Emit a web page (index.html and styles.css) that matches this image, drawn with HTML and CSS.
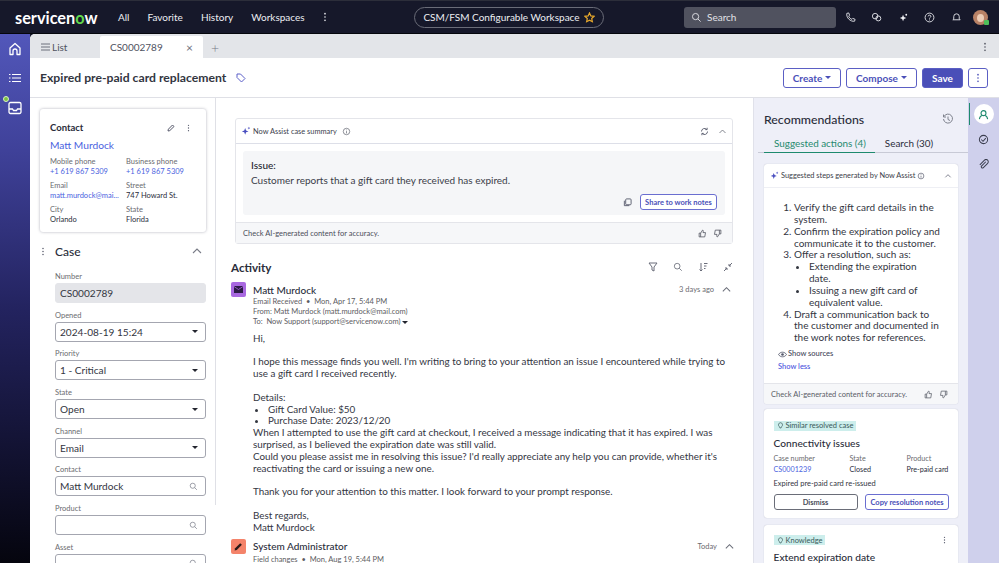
FILE: index.html
```html
<!DOCTYPE html>
<html lang="en">
<head>
<meta charset="utf-8">
<title>Expired pre-paid card replacement</title>
<link rel="stylesheet" href="styles.css">
</head>
<body>
<svg class="defs" width="0" height="0" aria-hidden="true">
  <defs>
    <symbol id="spark" viewBox="0 0 12 12"><path d="M5 2.500 6.100 5.400 9 6.500 6.100 7.600 5 10.500 3.900 7.600 1 6.500 3.900 5.400Z" fill="#4a4fc0"/><path d="M9.500.8 10 2 11.200 2.500 10 3 9.500 4.200 9 3 7.800 2.500 9 2Z" fill="#4a4fc0"/></symbol>
    <symbol id="info" viewBox="0 0 12 12"><circle cx="6" cy="6" r="4.300" fill="none" stroke="currentColor"/><path d="M6 5.500v3M6 3.400v1" stroke="currentColor"/></symbol>
    <symbol id="up" viewBox="0 0 12 12"><path d="M2 8l4-4 4 4" fill="none" stroke="currentColor" stroke-width="1.100"/></symbol>
    <symbol id="mag" viewBox="0 0 12 12"><circle cx="5" cy="5" r="3.400" fill="none" stroke="currentColor"/><path d="M7.500 7.500l3 3" stroke="currentColor"/></symbol>
    <symbol id="dots" viewBox="0 0 4 12"><circle cx="2" cy="2" r="1" fill="currentColor"/><circle cx="2" cy="6" r="1" fill="currentColor"/><circle cx="2" cy="10" r="1" fill="currentColor"/></symbol>
    <symbol id="thumbup" viewBox="0 0 12 12"><path d="M1.500 5.500h2v5h-2zM3.500 5.500 6 1.500c1 0 1.300.8 1 1.800L6.700 4.800h3.300l-1 5.700H3.500" fill="none" stroke="currentColor"/></symbol>
    <symbol id="thumbdown" viewBox="0 0 12 12"><path d="M10.500 6.500h-2v-5h2zM8.500 6.500 6 10.500c-1 0-1.300-.8-1-1.800l.3-1.500H2l1-5.700h5.500" fill="none" stroke="currentColor"/></symbol>
    <symbol id="bulb" viewBox="0 0 10 10"><path d="M5 1a3 3 0 0 1 1.800 5.300L5.800 8.500H4.200L3.200 6.300A3 3 0 0 1 5 1Z" fill="none" stroke="currentColor"/></symbol>
  </defs>
</svg>
<div class="app">
  <header class="topbar">
    <div class="logo">servicen<span class="logo-o">o</span>w</div>
    <nav class="nav"><span>All</span><span>Favorite</span><span>History</span><span>Workspaces</span>
      <svg class="nav-dots" width="4" height="10"><use href="#dots"/></svg></nav>
    <div class="workspace-wrap">
      <div class="workspace">CSM/FSM Configurable Workspace
        <svg width="11" height="11" viewBox="0 0 12 12"><path d="M6 1l1.500 3.300 3.500.4-2.600 2.400.7 3.500L6 8.900l-3.100 1.700.7-3.500L1 4.700l3.500-.4Z" fill="none" stroke="#e8a92c" stroke-width="1.300"/></svg>
      </div>
    </div>
    <div class="globalsearch">
      <svg width="11" height="11"><use href="#mag"/></svg><span>Search</span>
    </div>
    <div class="top-icons">
      <svg viewBox="0 0 12 12"><path d="M2 1.500 4 1 5 3.500 4 4.500C4.500 6 6 7.500 7.500 8L8.500 7l2.500 1-.5 2C6 11 1 6 2 1.500Z" fill="none" stroke="#e4e5ea"/></svg>
      <svg viewBox="0 0 12 12"><circle cx="4.500" cy="4.500" r="3" fill="none" stroke="#e4e5ea"/><circle cx="8" cy="7" r="2.700" fill="none" stroke="#e4e5ea"/></svg>
      <svg viewBox="0 0 12 12"><path d="M5.500 3 6.500 5.500 9 6.500 6.500 7.500 5.500 10 4.500 7.500 2 6.500 4.500 5.500Z" fill="#f0f1f5"/><circle cx="9" cy="3" r="1" fill="#f0f1f5"/></svg>
      <svg viewBox="0 0 12 12"><circle cx="6" cy="6" r="4.800" fill="none" stroke="#e4e5ea"/><path d="M4.500 4.800C4.500 3 7.500 3 7.500 4.800 7.500 6 6 5.800 6 7.200M6 8.200v1" fill="none" stroke="#e4e5ea"/></svg>
      <svg viewBox="0 0 12 12"><path d="M6 2a3 3 0 0 1 3 3v2.500l1 1H2l1-1V5a3 3 0 0 1 3-3Z" fill="none" stroke="#e4e5ea"/></svg>
      <span class="avatar"><span class="avatar-face"></span><span class="avatar-dot"></span></span>
    </div>
  </header>
  <div class="body">
    <aside class="rail">
      <svg width="14" height="14" viewBox="0 0 14 14"><path d="M2 12.500V6l5-4.500L12 6v6.500H9V9a2 2 0 0 0-4 0v3.500Z" fill="none" stroke="#fff" stroke-width="1.300" stroke-linejoin="round"/></svg>
      <svg width="14" height="14" viewBox="0 0 14 14"><path d="M4 3.500h9M4 7h9M4 10.500h9M1 3.500h1.500M1 7h1.500M1 10.500h1.500" stroke="#fff" stroke-width="1.200"/></svg>
      <span class="inbox">
        <span class="inbox-dot"></span>
        <svg width="14" height="14" viewBox="0 0 14 14"><path d="M1 8V3a1.500 1.500 0 0 1 1.500-1.500h9A1.500 1.500 0 0 1 13 3v8a1.500 1.500 0 0 1-1.500 1.500h-9A1.500 1.500 0 0 1 1 11V8h3.500l1 1.500h3l1-1.500H13" fill="none" stroke="#fff" stroke-width="1.300"/></svg>
      </span>
    </aside>
    <main class="main">
      <div class="tabs">
        <div class="tab tab-list"><svg width="9" height="8" viewBox="0 0 9 8"><path d="M0 1h9M0 4h9M0 7h9" stroke="#6d707c"/></svg>List</div>
        <div class="tab tab-active"><span>CS0002789</span><span class="tab-x">×</span></div>
        <span class="tab-plus">+</span>
        <svg class="tabs-dots" width="4" height="10"><use href="#dots"/></svg>
      </div>
      <div class="titlebar">
        <h1>Expired pre-paid card replacement</h1>
        <svg class="tag" width="10" height="10" viewBox="0 0 10 10"><path d="M1 1h3.500L9 5.500 5.500 9 1 4.500Z" fill="none" stroke="#5a5fc8"/></svg>
        <div class="actions">
          <button class="btn">Create <i class="caret"></i></button>
          <button class="btn btn-compose">Compose <i class="caret"></i></button>
          <button class="btn btn-primary">Save</button>
          <button class="btn btn-more"><svg width="4" height="10"><use href="#dots"/></svg></button>
        </div>
      </div>
      <div class="content">
        <section class="left">
          <div class="contact">
            <div class="contact-head"><strong>Contact</strong>
              <svg width="8" height="8" viewBox="0 0 8 8"><path d="M1 7l.4-1.800L5.500 1 7 2.500 2.800 6.600Z" fill="none" stroke="#55586a"/></svg>
              <svg class="c-dots" width="3" height="8" viewBox="0 0 4 12"><use href="#dots"/></svg>
            </div>
            <div class="contact-name">Matt Murdock</div>
            <div class="contact-grid">
              <div><label>Mobile phone</label><a>+1 619 867 5309</a></div>
              <div><label>Business phone</label><a>+1 619 867 5309</a></div>
              <div><label>Email</label><a class="trunc">matt.murdock@mai...</a></div>
              <div><label>Street</label><p>747 Howard St.</p></div>
              <div><label>City</label><p>Orlando</p></div>
              <div><label>State</label><p>Florida</p></div>
            </div>
          </div>
          <div class="case-head">
            <svg width="4" height="9" viewBox="0 0 4 12"><use href="#dots"/></svg>
            <h2>Case</h2>
            <svg class="case-up" width="12" height="12"><use href="#up"/></svg>
          </div>
          <div class="form">
            <div class="field"><label>Number</label><div class="input input-ro">CS0002789</div></div>
            <div class="field"><label>Opened</label><div class="input">2024-08-19 15:24<i class="caret dark"></i></div></div>
            <div class="field"><label>Priority</label><div class="input">1 - Critical<i class="caret dark"></i></div></div>
            <div class="field"><label>State</label><div class="input">Open<i class="caret dark"></i></div></div>
            <div class="field"><label>Channel</label><div class="input">Email<i class="caret dark"></i></div></div>
            <div class="field"><label>Contact</label><div class="input">Matt Murdock<svg class="mag" width="9" height="9"><use href="#mag"/></svg></div></div>
            <div class="field"><label>Product</label><div class="input"><svg class="mag" width="9" height="9"><use href="#mag"/></svg></div></div>
            <div class="field"><label>Asset</label><div class="input"><svg class="mag" width="9" height="9"><use href="#mag"/></svg></div></div>
          </div>
        </section>
        <section class="center">
          <div class="summary">
            <div class="summary-head">
              <svg width="10" height="10"><use href="#spark"/></svg>
              <span>Now Assist case summary</span>
              <svg class="sum-info" width="9" height="9"><use href="#info"/></svg>
              <svg class="sum-refresh" width="9" height="9" viewBox="0 0 12 12"><path d="M10 6a4 4 0 0 1-7 2.700M2 6a4 4 0 0 1 7-2.700M9.500 1v2.500H7M2.500 11V8.500H5" fill="none" stroke="#55586a" stroke-width="1.200"/></svg>
              <svg class="sum-up" width="9" height="9"><use href="#up"/></svg>
            </div>
            <div class="summary-body">
              <div class="summary-box">
                <strong>Issue:</strong>
                <p>Customer reports that a gift card they received has expired.</p>
                <div class="summary-actions">
                  <svg width="9" height="9" viewBox="0 0 10 10"><rect x="3" y="1" width="6" height="6.500" rx="1" fill="none" stroke="#55586a"/><path d="M1.500 3v5.500H7" fill="none" stroke="#55586a"/></svg>
                  <button class="share">Share to work notes</button>
                </div>
              </div>
            </div>
            <div class="ai-foot">
              <span>Check AI-generated content for accuracy.</span>
              <svg width="9" height="9"><use href="#thumbup"/></svg>
              <svg width="9" height="9"><use href="#thumbdown"/></svg>
            </div>
          </div>
          <div class="activity-head">
            <h2>Activity</h2>
            <div class="activity-tools">
              <svg width="10" height="10" viewBox="0 0 10 10"><path d="M1 1h8L6 5v4L4 8V5Z" fill="none" stroke="#6a6d7a"/></svg>
              <svg width="10" height="10"><use href="#mag"/></svg>
              <svg width="10" height="10" viewBox="0 0 10 10"><path d="M3 1v8M1.500 7.500 3 9l1.500-1.500M6 1.500h3.500M6 4h2.500M6 6.500h1.500" fill="none" stroke="#6a6d7a"/></svg>
              <svg width="10" height="10" viewBox="0 0 10 10"><path d="M9 1 6 4M6 2v2h2M1 9l3-3M4 8V6H2" fill="none" stroke="#6a6d7a"/></svg>
            </div>
          </div>
          <article class="entry">
            <span class="badge badge-mail"><svg width="9" height="7" viewBox="0 0 9 7"><path d="M0 0h9v7H0Z" fill="#2c1b46"/><path d="M0 .5l4.500 3 4.500-3" fill="none" stroke="#a868e0" stroke-width=".8"/></svg></span>
            <div class="entry-main">
              <div class="entry-top"><strong>Matt Murdock</strong><span class="when">3 days ago</span><svg class="entry-up" width="11" height="11"><use href="#up"/></svg></div>
              <div class="meta">Email Received &nbsp;•&nbsp; Mon, Apr 17, 5:44 PM</div>
              <div class="meta">From: Matt Murdock (matt.murdock@mail.com)</div>
              <div class="meta">To: &nbsp;Now Support (support@servicenow.com) <i class="caret dark small"></i></div>
              <div class="mail">
                <p>Hi,</p>
                <br>
                <p>I hope this message finds you well. I'm writing to bring to your attention an issue I encountered while trying to use a gift card I received recently.</p>
                <br>
                <p>Details:</p>
                <ul><li>Gift Card Value: $50</li><li>Purchase Date: 2023/12/20</li></ul>
                <p>When I attempted to use the gift card at checkout, I received a message indicating that it has expired. I was surprised, as I believed the expiration date was still valid.</p>
                <p>Could you please assist me in resolving this issue? I'd really appreciate any help you can provide, whether it's reactivating the card or issuing a new one.</p>
                <br>
                <p>Thank you for your attention to this matter. I look forward to your prompt response.</p>
                <br>
                <p>Best regards,</p>
                <p>Matt Murdock</p>
              </div>
            </div>
          </article>
          <article class="entry entry-2">
            <span class="badge badge-edit"><svg width="9" height="9" viewBox="0 0 8 8"><path d="M.5 7.500l.5-2L5.500 1 7 2.500 2.500 7Z" fill="#2a1a18"/></svg></span>
            <div class="entry-main">
              <div class="entry-top"><strong>System Administrator</strong><span class="when">Today</span><svg class="entry-up" width="11" height="11"><use href="#up"/></svg></div>
              <div class="meta">Field changes &nbsp;•&nbsp; Mon, Aug 19, 5:44 PM</div>
            </div>
          </article>
        </section>
        <section class="recs">
          <div class="recs-head">
            <h2>Recommendations</h2>
            <svg width="12" height="12" viewBox="0 0 12 12"><path d="M2 3.500A4.500 4.500 0 1 1 1.500 6M6 3.500V6.500L8 7.500M1.500 1.500v2.500H4" fill="none" stroke="#7d808c"/></svg>
          </div>
          <div class="recs-tabs"><span class="rt rt-active">Suggested actions (4)</span><span class="rt">Search (30)</span></div>
          <div class="card steps">
            <div class="steps-head">
              <svg width="9" height="9"><use href="#spark"/></svg>
              <span>Suggested steps generated by Now Assist</span>
              <svg class="steps-info" width="8" height="8"><use href="#info"/></svg>
              <svg class="steps-up" width="8" height="8"><use href="#up"/></svg>
            </div>
            <div class="steps-body">
              <ol>
                <li>Verify the gift card details in the system.</li>
                <li>Confirm the expiration policy and communicate it to the customer.</li>
                <li>Offer a resolution, such as:
                  <ul><li>Extending the expiration date.</li><li>Issuing a new gift card of equivalent value.</li></ul>
                </li>
                <li>Draft a communication back to the customer and documented in the work notes for references.</li>
              </ol>
              <div class="sources"><svg width="9" height="7" viewBox="0 0 10 8"><path d="M.5 4C2.500.5 7.500.5 9.500 4 7.500 7.500 2.500 7.500.5 4Z" fill="none" stroke="#55586a"/><circle cx="5" cy="4" r="1.500" fill="#55586a"/></svg>Show sources</div>
              <a class="less">Show less</a>
            </div>
            <div class="ai-foot ai-foot-rec">
              <span>Check AI-generated content for accuracy.</span>
              <svg width="9" height="9"><use href="#thumbup"/></svg>
              <svg width="9" height="9"><use href="#thumbdown"/></svg>
            </div>
          </div>
          <div class="card rec rec-case">
            <span class="pill"><svg width="7" height="7"><use href="#bulb"/></svg>Similar resolved case</span>
            <h3>Connectivity issues</h3>
            <div class="rec-grid">
              <div><label>Case number</label><a>CS0001239</a></div>
              <div><label>State</label><p>Closed</p></div>
              <div><label>Product</label><p>Pre-paid card</p></div>
            </div>
            <p class="rec-note">Expired pre-paid card re-issued</p>
            <div class="rec-btns"><button class="b-dismiss">Dismiss</button><button class="b-copy">Copy resolution notes</button></div>
          </div>
          <div class="card rec rec-kb">
            <div class="rec-top"><span class="pill"><svg width="7" height="7"><use href="#bulb"/></svg>Knowledge</span><svg width="3" height="8" viewBox="0 0 4 12"><use href="#dots"/></svg></div>
            <h3>Extend expiration date</h3>
          </div>
        </section>
        <aside class="side">
          <span class="side-on"><svg width="11" height="11" viewBox="0 0 12 12"><circle cx="6" cy="4.500" r="2.700" fill="none" stroke="#1e8a6e" stroke-width="1.200"/><path d="M1.500 11c.5-3 2-3.800 2.800-4M10.500 11c-.5-3-2-3.800-2.800-4" fill="none" stroke="#1e8a6e" stroke-width="1.200"/></svg></span>
          <svg width="11" height="11" viewBox="0 0 12 12"><circle cx="6" cy="6" r="4.500" fill="none" stroke="#3c3f50" stroke-width="1.100"/><path d="M3.500 6 5.500 8 8.500 4.500" fill="none" stroke="#3c3f50" stroke-width="1.100"/></svg>
          <svg width="11" height="11" viewBox="0 0 12 12"><path d="M8.500 3 3.800 7.800a1.300 1.300 0 0 0 1.800 1.800L10.500 4.700a2.400 2.400 0 0 0-3.400-3.400L2 6.400" fill="none" stroke="#3c3f50" stroke-width="1.100"/></svg>
        </aside>
      </div>
    </main>
  </div>
</div>
</body>
</html>
```
FILE: styles.css
```css
* { box-sizing: border-box; }
html, body { margin: 0; height: 100%; overflow: hidden; }
body { font-family: Lato, "Liberation Sans", sans-serif; color: #2a2d3a; background: #fff; font-size: 10px; }
.defs { display: block; }
h1, h2, h3, p, ul, ol { margin: 0; padding: 0; }
a { color: #4a62e0; }
label { display: block; color: #6b6b70; }
button { font-family: inherit; cursor: pointer; background: #fff; }

.app { width: 999px; height: 563px; display: flex; flex-direction: column; overflow: hidden; }

.topbar { height: 34px; flex: none; background: #16182a; border-top: 1px solid #2c2e3a; border-bottom: 1px solid #05060c; color: #eceef2; display: flex; align-items: center; padding-left: 15px; }
.logo { font-size: 16.300px; font-weight: 700; color: #fff; width: 103px; }
.logo-o { color: #62d84e; }
.nav { display: flex; align-items: center; gap: 18px; font-size: 10px; width: 296px; }
.nav-dots { color: #eceef2; }
.workspace-wrap { width: 270px; }
.workspace { width: 190px; height: 21px; border: 1px solid #6a6c78; border-radius: 11px; display: flex; align-items: center; justify-content: center; gap: 4px; font-size: 10px; }
.globalsearch { width: 152px; height: 21px; background: #50525f; border-radius: 3px; display: flex; align-items: center; gap: 5px; padding-left: 7px; font-size: 10px; color: #e2e3e8; }
.top-icons { display: flex; align-items: center; gap: 15.500px; margin-left: 8.500px; }
.top-icons svg { width: 11px; height: 11px; }
.avatar { position: relative; width: 15px; height: 15px; border-radius: 50%; background: #b98266; display: block; margin-left: -4.500px; }
.avatar-face { display: block; width: 7px; height: 8px; margin: 4px auto 0; border-radius: 50%; background: #eccdb6; }
.avatar-dot { position: absolute; right: -1px; bottom: 0; width: 5px; height: 5px; background: #4fc05a; border-radius: 1px; }

.body { flex: 1; display: flex; min-height: 0; background: #16182a; }
.rail { width: 30px; flex: none; background: linear-gradient(#5257ba 0%, #3f4199 22%, #23235f 52%, #05050e 100%); display: flex; flex-direction: column; align-items: center; padding-top: 8px; gap: 15px; }
.inbox { position: relative; display: block; height: 14px; margin-top: 1px; }
.inbox-dot { position: absolute; left: -5px; top: -5px; width: 6px; height: 6px; border-radius: 50%; background: #7cc242; border: 1px solid #d8efc4; }
.main { flex: 1; min-width: 0; display: flex; flex-direction: column; background: #fff; border-top-left-radius: 5px; overflow: hidden; }

.tabs { height: 24px; flex: none; background: #e3e5e9; display: flex; align-items: flex-end; padding-right: 12px; font-size: 10px; }
.tab { height: 22px; display: flex; align-items: center; }
.tab-list { width: 70px; padding-left: 11px; gap: 2px; color: #50535f; }
.tab-active { width: 103px; background: #fff; padding: 0 10px; justify-content: space-between; color: #50535f; border-radius: 2px 2px 0 0; }
.tab-x { font-size: 12px; color: #6d707c; }
.tab-plus { height: 22px; display: flex; align-items: center; margin-left: 8px; font-size: 14px; font-weight: 300; color: #777a86; }
.tabs-dots { margin-left: auto; margin-bottom: 6px; color: #50535f; }

.titlebar { height: 40px; flex: none; display: flex; align-items: center; padding: 0 11px 0 10px; border-bottom: 1px solid #dfe0e6; }
.titlebar h1 { font-size: 12.200px; font-weight: 700; color: #33363f; }
.tag { margin-left: 10px; }
.actions { margin-left: auto; display: flex; gap: 5px; }
.btn { height: 20px; width: 58px; border: 1px solid #5b5fc4; border-radius: 3px; color: #4a4fb8; font-size: 10px; font-weight: 700; padding: 0; display: flex; align-items: center; justify-content: center; gap: 3px; }
.btn-compose { width: 71px; }
.btn-primary { width: 41px; background: #4a4fb8; color: #fff; }
.btn-more { width: 20px; color: #4a4fb8; }
.caret { display: inline-block; width: 0; height: 0; border: 3px solid transparent; border-top: 3.500px solid currentColor; border-bottom: 0; }
.caret.dark { color: #23252f; }

.content { flex: 1; min-height: 0; display: flex; }

.left { width: 186px; flex: none; padding: 11px 10px 0; overflow: hidden; background: linear-gradient(#dfe0e6, #dfe0e6) right top / 1px 407px no-repeat; }
.contact { height: 123px; border-radius: 3px; padding: 13px 16px 0 10px; box-shadow: 0 0 3px rgba(30, 32, 60, .35); }
.contact-head { display: flex; align-items: center; }
.contact-head strong { font-size: 9.500px; font-weight: 700; flex: 1; }
.c-dots { margin-left: 12px; color: #55586a; }
.contact-name { font-size: 10.200px; color: #4a62e0; margin-top: 6px; }
.contact-grid { display: grid; grid-template-columns: 76px 1fr; font-size: 7.500px; margin-top: 6px; row-gap: 4px; line-height: 10px; }
.contact-grid p { color: #2a2d3a; }
.contact-grid a { display: block; white-space: nowrap; }
.case-head { display: flex; align-items: center; margin-top: 13px; height: 12px; margin-left: 1px; color: #55586a; }
.case-head h2 { font-size: 12px; font-weight: 500; margin-left: 10px; color: #2a2d3a; flex: 1; }
.case-up { margin-right: 3px; color: #7a7d88; }
.form { margin: 13px 0 0 15px; display: flex; flex-direction: column; gap: 5.700px; }
.field label { font-size: 7.500px; height: 13px; line-height: 13px; }
.input { height: 20px; border: 1px solid #a4a6b0; border-radius: 3px; display: flex; align-items: center; justify-content: space-between; padding: 0 7px 0 4px; font-size: 10.100px; color: #33363f; }
.input-ro { background: #e4e5e9; border-color: #e4e5e9; }
.mag { margin-left: auto; color: #7d808c; }

.center { width: 537px; flex: none; padding: 20px 20px 0 15px; overflow: hidden; }
.summary { margin-left: 4px; border: 1px solid #e4e5ea; border-radius: 3px; }
.summary-head { height: 25px; border-bottom: 1px solid #dddfe8; display: flex; align-items: center; padding: 0 5px; font-size: 7.400px; color: #3d404c; }
.summary-head span { margin-left: 2px; }
.sum-info { margin-left: 5px; color: #6a6d78; }
.sum-refresh { margin-left: auto; }
.sum-up { margin-left: 9px; color: #6a6d78; }
.summary-body { padding: 7px; }
.summary-box { background: #f5f6f8; border-radius: 3px; height: 64px; padding: 7px 8px 0; font-size: 10px; line-height: 14.500px; color: #3a3d48; }
.summary-box strong { font-weight: 500; color: #23252f; display: block; }
.summary-actions { display: flex; align-items: center; justify-content: flex-end; gap: 8px; margin-top: 7px; }
.share { width: 77px; height: 16px; border: 1px solid #6a6ed0; border-radius: 3px; color: #4a4fb8; font-size: 7.500px; font-weight: 700; padding: 0; }
.ai-foot { display: flex; align-items: center; height: 21px; background: #f6f7f9; border-top: 1px solid #e4e5ea; padding: 0 10px 0 7px; font-size: 7.500px; color: #4b4e5a; gap: 6px; }
.ai-foot span { flex: 1; }
.activity-head { display: flex; align-items: center; justify-content: space-between; margin-top: 17px; height: 12px; }
.activity-head h2 { font-size: 11.600px; font-weight: 700; color: #2a2d3a; }
.activity-tools { display: flex; gap: 15px; color: #6a6d7a; }
.entry { display: flex; gap: 7px; margin-top: 9px; }
.entry-2 { margin-top: 5px; }
.entry-2 .entry-up { margin-right: -1.500px; }
.entry-2 .meta { margin-top: 1px; }
.badge { width: 15px; height: 15px; flex: none; border-radius: 2px; display: flex; align-items: center; justify-content: center; }
.badge-mail { background: #a868e0; }
.badge-edit { background: #f4836a; }
.entry-main { flex: 1; min-width: 0; }
.entry-top { display: flex; align-items: center; height: 15px; font-size: 10px; }
.entry-top strong { font-weight: 500; flex: 1; color: #2a2d3a; }
.when { font-size: 7.500px; color: #6b6b70; }
.entry-up { margin: 0 1.500px 0 6.500px; color: #6a6d78; }
.meta { font-size: 7.500px; line-height: 10px; color: #5c5c62; }
.small { vertical-align: middle; }
.mail { margin-top: 5.500px; font-size: 9.850px; line-height: 11.850px; color: #33363f; }
.mail ul { padding-left: 15px; }

.recs { width: 215px; flex: none; background: #eeeff8; padding: 0 10px; overflow: hidden; border-left: 1px solid #e0e1ea; }
.recs-head { height: 40px; display: flex; align-items: center; justify-content: space-between; margin-right: 4px; padding-top: 2px; }
.recs-head h2 { font-size: 12.300px; font-weight: 500; color: #2a2d3a; }
.recs-tabs { display: flex; height: 15px; border-bottom: 1px solid #c8cad6; margin: 0 -10px 0 -6px; padding-left: 6px; font-size: 9.900px; }
.rt { padding: 0 3px; margin-right: 7px; height: 15px; line-height: 11px; color: #2a2d3a; }
.rt-active { color: #1e8a6e; border-bottom: 1px solid #1e8a6e; padding: 0 9px 0 10px; margin: 0 7px 0 0; }
.card { background: #fff; border-radius: 3px; box-shadow: 0 0 1px rgba(30, 32, 60, .3); }
.steps { margin-top: 11px; }
.steps-head { height: 24px; border-bottom: 1px solid #eeeff4; display: flex; align-items: center; padding: 0 6px; font-size: 7.400px; color: #3a3d48; }
.steps-head span { margin-left: 2px; }
.steps-info { margin-left: 2px; color: #55586a; }
.steps-up { margin-left: auto; color: #55586a; }
.steps-body { padding: 14px 16px 0 14px; height: 195px; font-size: 10px; line-height: 11.850px; color: #33363f; }
.steps-body ol { padding-left: 16px; }
.steps-body ul { padding: 0 10px 0 15px; list-style: disc; }
.sources { display: flex; align-items: center; gap: 1px; font-size: 7.500px; font-weight: 500; margin-top: 5px; line-height: 10px; color: #45485a; }
.less { display: block; font-size: 7.500px; font-weight: 500; color: #4a52dd; margin-top: 3px; line-height: 10px; }
.ai-foot-rec { border-radius: 0 0 3px 3px; color: #5a5d68; }
.rec { padding: 10px 9px 0 9.500px; }
.rec-case { margin-top: 5px; height: 109px; }
.rec-kb { margin-top: 7px; height: 60px; }
.pill { display: inline-flex; align-items: center; gap: 2px; height: 10px; background: #cdeeec; padding: 0 3px; font-size: 7.500px; color: #3a5a5a; }
.rec h3 { font-size: 10.200px; font-weight: 500; margin-top: 6px; color: #2a2d3a; line-height: 12px; }
.rec-grid { display: grid; grid-template-columns: 76px 57px 1fr; font-size: 7.200px; line-height: 10.500px; margin-top: 5px; white-space: nowrap; }
.rec-note { font-size: 7.500px; margin-top: 4px; line-height: 10px; color: #33363f; }
.rec-btns { display: flex; justify-content: space-between; margin-top: 5px; }
.rec-btns button { height: 16px; border-radius: 3px; font-size: 7.500px; font-weight: 700; padding: 0; }
.b-dismiss { width: 84px; border: 1px solid #6a6d78; color: #4b4e5a; }
.b-copy { width: 84px; border: 1px solid #6a6ed0; color: #4a4fb8; }
.rec-top { display: flex; justify-content: space-between; align-items: center; padding-right: 3px; color: #55586a; }
.side { flex: 1; background: #cfd0ec; display: flex; flex-direction: column; align-items: center; padding-top: 6px; gap: 14px; }
.side-on { position: relative; width: 20px; height: 20px; background: #fff; border-radius: 50%; display: flex; align-items: center; justify-content: center; margin-bottom: -4px; }
.side-on::before { content: ""; position: absolute; left: -5px; top: -1px; width: 1px; height: 22px; background: #1e8a6e; }
```
